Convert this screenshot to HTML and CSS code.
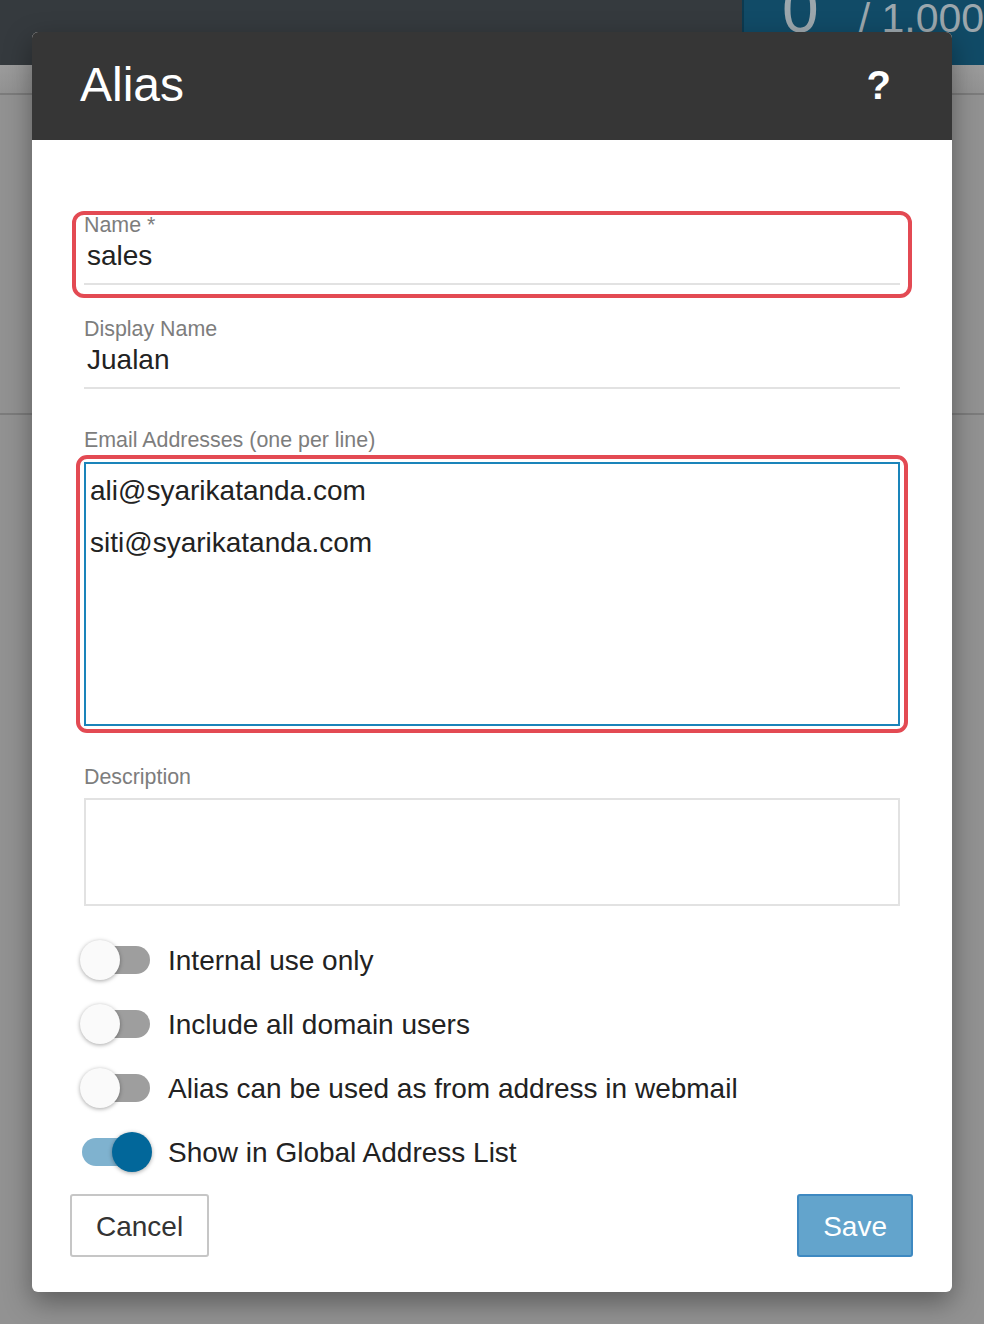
FILE: index.html
```html
<!DOCTYPE html>
<html lang="en">
<head>
<meta charset="utf-8">
<title>Alias</title>
<link rel="stylesheet" href="styles.css">
</head>
<body>
<div class="app">
  <div class="topbar">
    <div class="counter">
      <div class="counter-inner">
        <span class="count-big">0</span>
        <span class="count-total">/ 1.000</span>
      </div>
    </div>
  </div>
  <div class="page-row row-a"></div>
  <div class="page-row row-b"></div>
</div>

<div class="modal">
  <div class="modal-header">
    <h1 class="modal-title">Alias</h1>
    <span class="help">?</span>
  </div>
  <div class="modal-body">
    <div class="field field-name annot">
      <label class="label">Name *</label>
      <div class="input">sales</div>
    </div>
    <div class="field field-display">
      <label class="label">Display Name</label>
      <div class="input">Jualan</div>
    </div>
    <div class="field field-email">
      <label class="label">Email Addresses (one per line)</label>
      <div class="textarea-wrap annot annot-email">
        <textarea class="textarea" readonly>ali@syarikatanda.com
siti@syarikatanda.com</textarea>
      </div>
    </div>
    <div class="field field-desc">
      <label class="label">Description</label>
      <div class="desc-box"></div>
    </div>
    <div class="toggles">
      <div class="toggle-row">
        <span class="toggle"><span class="track"></span><span class="knob"></span></span>
        <span class="toggle-text">Internal use only</span>
      </div>
      <div class="toggle-row">
        <span class="toggle"><span class="track"></span><span class="knob"></span></span>
        <span class="toggle-text">Include all domain users</span>
      </div>
      <div class="toggle-row">
        <span class="toggle"><span class="track"></span><span class="knob"></span></span>
        <span class="toggle-text">Alias can be used as from address in webmail</span>
      </div>
      <div class="toggle-row">
        <span class="toggle on"><span class="track"></span><span class="knob"></span></span>
        <span class="toggle-text">Show in Global Address List</span>
      </div>
    </div>
    <div class="footer">
      <button class="btn btn-cancel" type="button">Cancel</button>
      <button class="btn btn-save" type="button">Save</button>
    </div>
  </div>
</div>
</body>
</html>
```

FILE: styles.css
```css
* { box-sizing: border-box; }

html, body {
  margin: 0;
  padding: 0;
}

body {
  width: 984px;
  height: 1324px;
  position: relative;
  overflow: hidden;
  background: #929292;
  font-family: "Liberation Sans", Arial, sans-serif;
}

/* background app (behind the overlay) */
.topbar {
  height: 65px;
  background: #353a3e;
  display: flex;
  justify-content: flex-end;
}

.counter {
  width: 242px;
  height: 65px;
  background: #114b67;
  border-left: 2px solid #0c3a50;
  overflow: hidden;
}

.counter-inner {
  display: flex;
  align-items: baseline;
  margin-top: -24px;
  padding-left: 38px;
  color: #9ca7ad;
  white-space: nowrap;
}

.count-big {
  font-size: 66px;
  line-height: 1;
}

.count-total {
  font-size: 41px;
  line-height: 1;
  margin-left: 40px;
}

.page-row {
  border-bottom: 2px solid #7c7c7c;
}

.row-a {
  height: 30px;
  background: linear-gradient(#9c9c9c, #929292);
}

.row-b {
  height: 320px;
}

/* modal */
.modal {
  position: absolute;
  left: 32px;
  top: 32px;
  width: 920px;
  background: #ffffff;
  border-radius: 6px;
  overflow: hidden;
  box-shadow: 0 10px 28px rgba(0, 0, 0, 0.38);
}

.modal-header {
  height: 108px;
  background: #363636;
  display: flex;
  align-items: center;
  justify-content: space-between;
  padding: 0 61px 3px 48px;
  color: #ffffff;
}

.modal-title {
  margin: 0;
  font-size: 48px;
  font-weight: normal;
  line-height: 1;
}

.help {
  font-size: 40px;
  font-weight: bold;
  line-height: 1;
}

.modal-body {
  padding: 74px 52px 35px 52px;
}

.field {
  display: flex;
  flex-direction: column;
}

.label {
  font-size: 21.4px;
  line-height: 22px;
  color: #7d7d7d;
}

.input {
  font-size: 28px;
  line-height: 36px;
  color: #222222;
  padding: 2px 3px 9px 3px;
  border-bottom: 2px solid #e2e2e2;
}

.field-display { margin-top: 33px; }
.field-email { margin-top: 40px; }
.field-desc { margin-top: 40px; }

/* red annotation outlines */
.annot { position: relative; }

.annot::after {
  content: "";
  position: absolute;
  top: -3px;
  left: -12px;
  right: -12px;
  bottom: -13px;
  border: 4px solid #e34a53;
  border-radius: 12px;
  pointer-events: none;
}

.annot-email::after {
  top: -7px;
  left: -8px;
  right: -8px;
  bottom: -7px;
  border-radius: 11px;
}

.textarea-wrap {
  margin-top: 11px;
  display: flex;
}

.textarea {
  display: block;
  width: 100%;
  height: 264px;
  margin: 0;
  border: 2px solid #1a84ba;
  border-radius: 0;
  padding: 1px 4px;
  font-family: "Liberation Sans", Arial, sans-serif;
  font-size: 28px;
  line-height: 52px;
  color: #222222;
  resize: none;
  overflow: hidden;
  outline: none;
  background: #ffffff;
}

.desc-box {
  margin-top: 10px;
  height: 108px;
  border: 2px solid #e2e2e2;
}

/* toggles */
.toggles {
  margin-top: 22px;
}

.toggle-row {
  height: 64px;
  display: flex;
  align-items: center;
}

.toggle {
  position: relative;
  width: 72px;
  height: 40px;
  margin-left: -4px;
  flex: none;
}

.track {
  display: block;
  width: 68px;
  height: 28px;
  margin: 6px 0 0 2px;
  border-radius: 14px;
  background: #9e9e9e;
}

.knob {
  position: absolute;
  top: 0;
  left: 0;
  width: 40px;
  height: 40px;
  border-radius: 50%;
  background: #fafafa;
  box-shadow: 0 1px 4px rgba(0, 0, 0, 0.35);
}

.toggle.on .track {
  background: #7fb2cf;
}

.toggle.on .knob {
  left: 32px;
  background: #02679a;
}

.toggle-text {
  margin-left: 16px;
  margin-top: 2px;
  font-size: 28px;
  line-height: 64px;
  color: #222222;
  white-space: nowrap;
}

/* footer */
.footer {
  display: flex;
  justify-content: space-between;
  margin: 10px -13px 0 -14px;
}

.btn {
  height: 63px;
  padding: 3px 24px 0 24px;
  font-family: "Liberation Sans", Arial, sans-serif;
  font-size: 28px;
  line-height: 1;
  border-radius: 3px;
  cursor: pointer;
}

.btn-cancel {
  background: #ffffff;
  border: 2px solid #c6c6c6;
  color: #333333;
}

.btn-save {
  background: #63a4cc;
  border: 2px solid #3e89c1;
  color: #ffffff;
}
```
